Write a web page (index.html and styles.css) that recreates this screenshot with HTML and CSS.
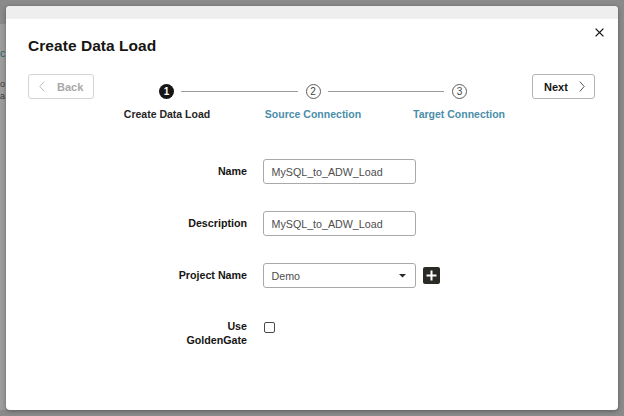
FILE: index.html
```html
<!DOCTYPE html>
<html lang="en">
<head>
<meta charset="utf-8">
<title>Create Data Load</title>
<link rel="stylesheet" href="styles.css">
</head>
<body>
<div class="page">
  <div class="page-top"></div>
  <div class="page-main">
    <div class="side">
      <div class="peek peek-title">c</div>
      <div class="peek peek-text peek-gap">o</div>
      <div class="peek peek-text">a</div>
    </div>
  </div>
</div>

<div class="modal" role="dialog" aria-label="Create Data Load">
  <div class="modal-band"></div>
  <div class="modal-head">
    <h1 class="title">Create Data Load</h1>
    <button class="close" aria-label="Close">
      <svg width="9" height="9" viewBox="0 0 9 9"><path d="M0.6 0.6 L8.4 8.4 M8.4 0.6 L0.6 8.4" stroke="#161513" stroke-width="1.3" fill="none"/></svg>
    </button>
  </div>

  <div class="nav">
    <button class="btn btn-back">
      <svg width="6" height="11" viewBox="0 0 6 11"><polyline points="5.2,0.6 0.8,5.5 5.2,10.4" fill="none" stroke="#bdbdbd" stroke-width="1"/></svg>
      <span>Back</span>
    </button>

    <div class="stepper">
      <div class="track">
        <span class="num done">1</span>
        <span class="line"></span>
        <span class="num todo">2</span>
        <span class="line"></span>
        <span class="num todo">3</span>
      </div>
      <div class="labels">
        <span class="step-label current">Create Data Load</span>
        <span class="step-label link">Source Connection</span>
        <span class="step-label link">Target Connection</span>
      </div>
    </div>

    <button class="btn btn-next">
      <span>Next</span>
      <svg width="6" height="11" viewBox="0 0 6 11"><polyline points="0.8,0.6 5.2,5.5 0.8,10.4" fill="none" stroke="#555" stroke-width="1"/></svg>
    </button>
  </div>

  <div class="form">
    <div class="row">
      <label class="lbl">Name</label>
      <div class="field">MySQL_to_ADW_Load</div>
    </div>
    <div class="row">
      <label class="lbl">Description</label>
      <div class="field">MySQL_to_ADW_Load</div>
    </div>
    <div class="row">
      <label class="lbl">Project Name</label>
      <div class="field select">
        <span>Demo</span>
        <svg width="7" height="4" viewBox="0 0 7 4"><polygon points="0,0 7,0 3.5,3.6" fill="#2a2a2a"/></svg>
      </div>
      <button class="plus" aria-label="Add project">
        <svg width="11" height="11" viewBox="0 0 11 11"><path d="M5.5 0.5 V10.5 M0.5 5.5 H10.5" stroke="#fff" stroke-width="2" fill="none"/></svg>
      </button>
    </div>
    <div class="row row-check">
      <label class="lbl">Use<br>GoldenGate</label>
      <span class="checkbox"></span>
    </div>
  </div>
</div>
</body>
</html>
```

FILE: styles.css
```css
* { box-sizing: border-box; margin: 0; padding: 0; }

html, body { width: 624px; height: 416px; overflow: hidden; }

body {
  font-family: "Liberation Sans", Arial, Helvetica, sans-serif;
  background: #8a8a8a;
  color: #161513;
  position: relative;
}

/* dimmed page behind the dialog */
.page { display: flex; flex-direction: column; height: 416px; }
.page-top { height: 24px; }
.page-main { flex: 1; display: flex; padding-bottom: 6px; }
.side {
  width: 6px;
  background: #9d9d9d;
  padding-top: 20px;
  display: flex;
  flex-direction: column;
}
.peek { width: 6px; white-space: nowrap; }
.peek-title { font-size: 11px; line-height: 18px; color: #2d5f73; }
.peek-text { font-size: 9px; line-height: 12px; color: #3a3a3a; }
.peek-gap { margin-top: 16px; }

/* dialog */
.modal {
  position: absolute;
  left: 6px;
  top: 6px;
  width: 612px;
  height: 404px;
  background: #fff;
  border-radius: 4px;
  box-shadow: 0 1px 4px rgba(0, 0, 0, 0.35);
  overflow: hidden;
  display: flex;
  flex-direction: column;
}
.modal-band { height: 13px; background: #eeeeee; }

.modal-head {
  display: flex;
  justify-content: space-between;
  align-items: flex-start;
  padding: 9px 14px 0 22px;
}
.title {
  font-size: 15.5px;
  line-height: 18px;
  font-weight: bold;
  margin-top: 9px;
  letter-spacing: 0.05px;
}
.close {
  width: 9px;
  height: 9px;
  border: 0;
  background: none;
  display: flex;
}

/* navigation row */
.nav {
  display: flex;
  align-items: flex-start;
  margin-top: 19px;
  padding: 0 23px 0 22px;
}
.btn {
  height: 25px;
  border: 1px solid #c8c8c8;
  border-radius: 3px;
  background: #fff;
  display: flex;
  align-items: center;
  font-family: inherit;
  font-size: 11px;
  font-weight: bold;
}
.btn-back {
  width: 66px;
  padding-left: 10px;
  gap: 12px;
  color: #a8a8a8;
  border-color: #d4d4d4;
}
.btn-next {
  width: 63px;
  padding-left: 11px;
  gap: 11px;
  color: #161513;
  border-color: #b4b4b4;
}

.stepper { flex: 1; display: flex; flex-direction: column; }
.track {
  display: flex;
  align-items: center;
  padding: 10px 65px 0 65px;
}
.num {
  width: 15px;
  height: 15px;
  border-radius: 50%;
  display: flex;
  align-items: center;
  justify-content: center;
  font-size: 10px;
  flex: none;
}
.num.done { background: #161513; color: #fff; font-weight: bold; }
.num.todo { border: 1.3px solid #5c5c5c; color: #3f3f3f; }
.line {
  flex: 1;
  height: 1px;
  background: #9c9c9c;
  margin: 0 8px 0 7px;
}
.labels {
  display: grid;
  grid-template-columns: repeat(3, 1fr);
  margin-top: 9px;
  font-size: 10.5px;
  line-height: 13px;
  font-weight: bold;
  text-align: center;
}
.step-label.current { color: #262524; }
.step-label.link { color: #4a8ea9; }

/* form */
.form {
  margin-top: 38px;
  padding-left: 22px;
  display: flex;
  flex-direction: column;
  gap: 27px;
}
.row { display: flex; align-items: center; }
.lbl {
  width: 219px;
  margin-right: 16px;
  text-align: right;
  font-size: 10.7px;
  line-height: 13.5px;
  font-weight: bold;
  color: #161513;
}
.field {
  width: 153px;
  height: 25px;
  border: 1px solid #a9a9a9;
  border-radius: 3px;
  padding-left: 7.5px;
  font-size: 10.7px;
  color: #4d4d4d;
  display: flex;
  align-items: center;
}
.select { justify-content: space-between; padding-right: 9px; }
.plus {
  width: 17px;
  height: 17px;
  margin-left: 7px;
  border: 0;
  border-radius: 2px;
  background: #2b2926;
  display: flex;
  align-items: center;
  justify-content: center;
}
.row-check { align-items: flex-start; margin-top: 5px; }
.checkbox {
  width: 11px;
  height: 11px;
  margin-top: 2px;
  margin-left: 1px;
  border: 1px solid #4a4a4a;
  border-radius: 2px;
  background: #fff;
}
```
